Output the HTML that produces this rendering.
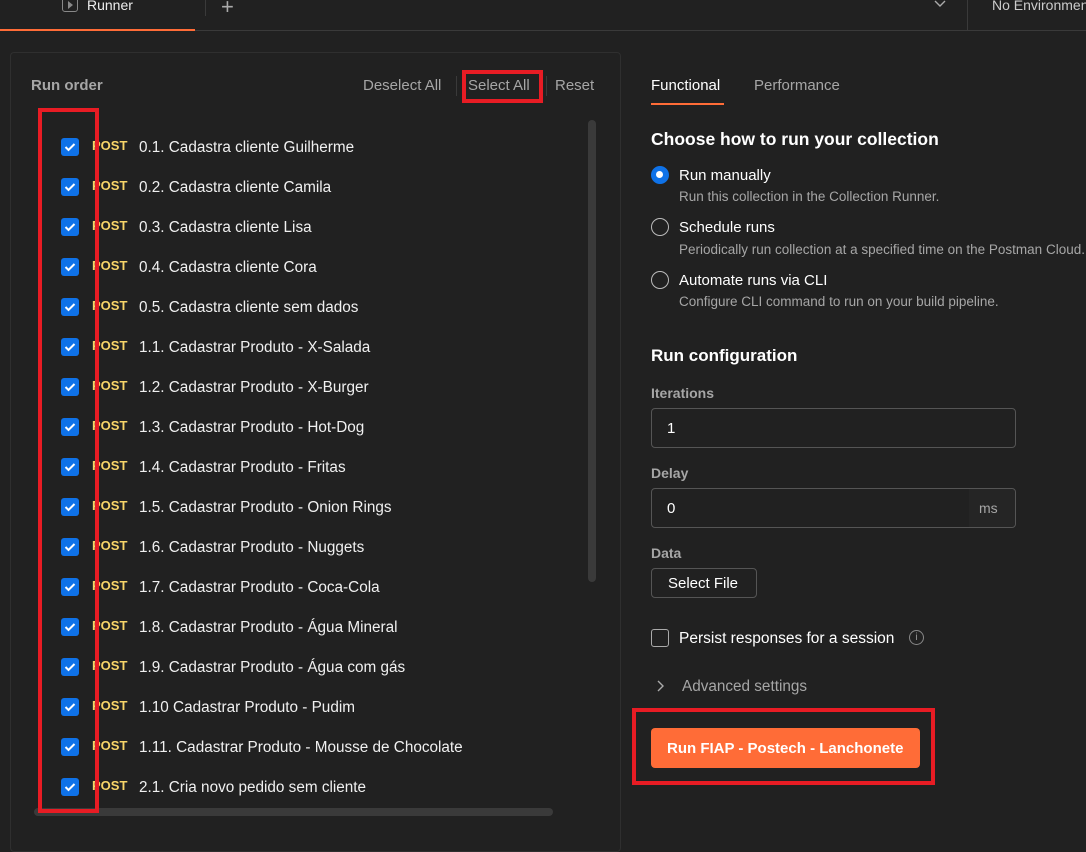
<!DOCTYPE html>
<html><head><style>
*{margin:0;padding:0;box-sizing:border-box}
body{width:1086px;height:832px;background:#212121;font-family:"Liberation Sans",sans-serif;color:#fff;position:relative;overflow:hidden}
.a{position:absolute;white-space:nowrap}
.cb{position:absolute;left:61px;width:18px;height:18px;background:#0f72e8;border-radius:3px}
.cb svg{position:absolute;left:3px;top:4px}
.post{position:absolute;left:92px;font-size:13px;font-weight:bold;color:#f8d569}
.t{position:absolute;left:139px;font-size:15.3px;color:#f0f0f0}
.g{color:#a6a6a6}
.rb{position:absolute;left:651px;width:18px;height:18px;border:1.5px solid #bbb;border-radius:50%}
.inp{position:absolute;left:651px;width:365px;height:40px;border:1px solid #555;border-radius:4px}
</style></head><body>
<div class="a" style="left:0;top:30px;width:1086px;height:1px;background:#3a3a3a"></div>
<div class="a" style="left:0;top:29px;width:195px;height:2px;background:#ff6c37"></div>
<div class="a" style="left:62px;top:-4px;width:16px;height:16px;border:1.5px solid #888;border-radius:3px"></div>
<div class="a" style="left:68px;top:1px;width:0;height:0;border-left:5px solid #888;border-top:4px solid transparent;border-bottom:4px solid transparent"></div>
<div class="a" style="left:87px;top:-3px;font-size:14px;color:#eee">Runner</div>
<div class="a" style="left:205px;top:0;width:1px;height:16px;background:#3a3a3a"></div>
<div class="a" style="left:221px;top:-6px;font-size:22px;color:#aaa;font-weight:300">+</div>
<svg class="a" style="left:934px;top:0" width="12" height="8"><path d="M1 1l5 5 5-5" stroke="#aaa" stroke-width="1.4" fill="none"/></svg>
<div class="a" style="left:967px;top:0;width:1px;height:30px;background:#3a3a3a"></div>
<div class="a" style="left:992px;top:-3px;font-size:14px;color:#ccc">No Environment</div>
<div class="a" style="left:10px;top:52px;width:611px;height:800px;border:1px solid #2f2f2f;border-radius:4px"></div>
<div class="a" style="left:31px;top:77px;font-size:15px;font-weight:bold;color:#a6a6a6">Run order</div>
<div class="a g" style="left:363px;top:77px;font-size:15px">Deselect All</div>
<div class="a" style="left:456px;top:76px;width:1px;height:20px;background:#3a3a3a"></div>
<div class="a g" style="left:468px;top:77px;font-size:15px">Select All</div>
<div class="a" style="left:546px;top:76px;width:1px;height:20px;background:#3a3a3a"></div>
<div class="a g" style="left:555px;top:77px;font-size:15px">Reset</div>
<div class="a" style="left:588px;top:120px;width:8px;height:462px;background:#3a3a3a;border-radius:4px"></div>
<div class="a" style="left:34px;top:808px;width:519px;height:8px;background:#3a3a3a;border-radius:4px"></div>
<div id="rows"></div>
<div class="a" style="left:651px;top:77px;font-size:15px;color:#fff">Functional</div>
<div class="a" style="left:651px;top:103px;width:73px;height:2px;background:#ff6c37"></div>
<div class="a g" style="left:754px;top:77px;font-size:15px">Performance</div>
<div class="a" style="left:651px;top:129px;font-size:17.5px;font-weight:bold">Choose how to run your collection</div>
<div class="rb" style="top:166px;background:#0f72e8;border-color:#0f72e8"><div style="position:absolute;left:4px;top:4px;width:7px;height:7px;background:#fff;border-radius:50%"></div></div>
<div class="a" style="left:679px;top:167px;font-size:15px">Run manually</div>
<div class="a g" style="left:679px;top:189px;font-size:13.5px">Run this collection in the Collection Runner.</div>
<div class="rb" style="top:218px"></div>
<div class="a" style="left:679px;top:219px;font-size:15px">Schedule runs</div>
<div class="a g" style="left:679px;top:242px;font-size:13.5px">Periodically run collection at a specified time on the Postman Cloud.</div>
<div class="rb" style="top:271px"></div>
<div class="a" style="left:679px;top:272px;font-size:15px">Automate runs via CLI</div>
<div class="a g" style="left:679px;top:294px;font-size:13.5px">Configure CLI command to run on your build pipeline.</div>
<div class="a" style="left:651px;top:346px;font-size:17px;font-weight:bold">Run configuration</div>
<div class="a" style="left:651px;top:385px;font-size:14px;font-weight:bold;color:#a6a6a6">Iterations</div>
<div class="inp" style="top:408px"></div>
<div class="a" style="left:667px;top:420px;font-size:15px">1</div>
<div class="a" style="left:651px;top:465px;font-size:14px;font-weight:bold;color:#a6a6a6">Delay</div>
<div class="inp" style="top:488px"></div>
<div class="a" style="left:969px;top:489px;width:46px;height:38px;background:#252525;border-radius:0 4px 4px 0"></div>
<div class="a" style="left:667px;top:500px;font-size:15px">0</div>
<div class="a g" style="left:979px;top:500px;font-size:14px">ms</div>
<div class="a" style="left:651px;top:545px;font-size:14px;font-weight:bold;color:#a6a6a6">Data</div>
<div class="a" style="left:651px;top:568px;width:106px;height:30px;border:1px solid #555;border-radius:4px"></div>
<div class="a" style="left:668px;top:575px;font-size:15px">Select File</div>
<div class="a" style="left:651px;top:629px;width:18px;height:18px;border:1.5px solid #aaa;border-radius:3px"></div>
<div class="a" style="left:679px;top:630px;font-size:15.5px">Persist responses for a session</div>
<div class="a" style="left:909px;top:630px;width:15px;height:15px;border:1px solid #888;border-radius:50%;font-size:10px;color:#999;text-align:center;line-height:13px">i</div>
<svg class="a" style="left:657px;top:680px" width="8" height="12"><path d="M1 1l5 5-5 5" stroke="#aaa" stroke-width="1.4" fill="none"/></svg>
<div class="a g" style="left:682px;top:678px;font-size:15.3px">Advanced settings</div>
<div class="a" style="left:651px;top:728px;width:269px;height:40px;background:#ff6c37;border-radius:4px"></div>
<div class="a" style="left:667px;top:740px;font-size:15px;font-weight:bold">Run FIAP - Postech - Lanchonete</div>
<div class="a" style="left:38px;top:108px;width:61px;height:705px;border:4px solid #e81c24"></div>
<div class="a" style="left:462px;top:70px;width:81px;height:33px;border:4px solid #e81c24"></div>
<div class="a" style="left:632px;top:708px;width:303px;height:77px;border:4px solid #e81c24"></div>
<script>
var n=["0.1. Cadastra cliente Guilherme","0.2. Cadastra cliente Camila","0.3. Cadastra cliente Lisa","0.4. Cadastra cliente Cora","0.5. Cadastra cliente sem dados","1.1. Cadastrar Produto - X-Salada","1.2. Cadastrar Produto - X-Burger","1.3. Cadastrar Produto - Hot-Dog","1.4. Cadastrar Produto - Fritas","1.5. Cadastrar Produto - Onion Rings","1.6. Cadastrar Produto - Nuggets","1.7. Cadastrar Produto - Coca-Cola","1.8. Cadastrar Produto - Água Mineral","1.9. Cadastrar Produto - Água com gás","1.10 Cadastrar Produto - Pudim","1.11. Cadastrar Produto - Mousse de Chocolate","2.1. Cria novo pedido sem cliente"];
var h="";n.forEach(function(s,i){var y=147+40*i;h+='<div class="cb" style="top:'+(y-9)+'px"><svg width="12" height="10"><path d="M1.5 5l3 3 6-6" stroke="#fff" stroke-width="2" fill="none"/></svg></div><div class="a post" style="top:'+(y-9)+'px">POST</div><div class="a t" style="top:'+(y-8)+'px">'+s+'</div>';});
document.getElementById("rows").innerHTML=h;
</script>
</body></html>
